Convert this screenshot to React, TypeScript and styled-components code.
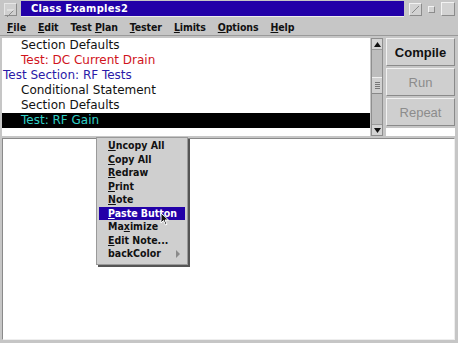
import React from "react";
import styled, { createGlobalStyle } from "styled-components";

const GlobalStyle = createGlobalStyle`
  html, body {
    margin: 0;
    padding: 0;
    background: #c4c4c4;
  }
  body {
    font-family: "DejaVu Sans", "Liberation Sans", sans-serif;
  }
`;

const Styles = {
  Window: styled.div`
    width: 458px;
    height: 343px;
    background: #c6c6c6;
    display: flex;
    flex-direction: column;
    position: relative;
    overflow: hidden;
  `,

  TitleBar: styled.div`
    height: 18px;
    display: flex;
    align-items: center;
    padding: 0 3px 0 4px;
    gap: 3px;
    background: #c6c6c6;
  `,
  CloseBox: styled.div`
    width: 11px;
    height: 11px;
    border: 1px solid #e6e6e6;
    border-right-color: #8a8a8a;
    border-bottom-color: #8a8a8a;
    background: #cfcfcf;
    margin-right: 1px;
  `,
  Title: styled.div`
    flex: 1;
    height: 15px;
    background: #2200a8;
    color: #ffffff;
    font-family: "DejaVu Sans Condensed", "DejaVu Sans", sans-serif;
    font-weight: bold;
    font-size: 11px;
    line-height: 15px;
    padding-left: 10px;
    border-bottom: 1px solid #ededed;
    letter-spacing: 0.3px;
  `,
  WidgetRow: styled.div`
    display: flex;
    align-items: center;
    gap: 6px;
    margin-left: 2px;
  `,
  Widget: styled.div<{ size: number }>`
    width: ${({ size }) => size}px;
    height: ${({ size }) => size}px;
    border: 1px solid #8c8c8c;
    border-top-color: #f2f2f2;
    border-left-color: #f2f2f2;
    background: #d2d2d2;
    display: flex;
    align-items: center;
    justify-content: center;
  `,

  MenuBar: styled.div`
    height: 17px;
    display: flex;
    align-items: center;
    padding-left: 7px;
    gap: 12px;
    background: #c6c6c6;
  `,
  MenuItem: styled.span`
    font-family: "DejaVu Sans Condensed", "DejaVu Sans", sans-serif;
    font-weight: bold;
    font-size: 10.5px;
    color: #111;
    letter-spacing: -0.1px;
    white-space: nowrap;
  `,
  Mnemonic: styled.span`
    text-decoration: underline;
    text-underline-offset: 1px;
  `,

  TopPane: styled.div`
    height: 98px;
    display: flex;
    padding: 2px 3px 0 2px;
    border-top: 1px solid #9a9a9a;
  `,
  ListBox: styled.div`
    flex: 1;
    background: #ffffff;
    display: flex;
    flex-direction: column;
    overflow: hidden;
  `,
  ListRow: styled.div<{ indent: number; color: string; selected?: boolean }>`
    height: 15px;
    line-height: 15px;
    padding-left: ${({ indent }) => indent}px;
    color: ${({ color }) => color};
    background: ${({ selected }) => (selected ? "#000000" : "transparent")};
    font-family: "DejaVu Sans", sans-serif;
    font-size: 12px;
    white-space: nowrap;
  `,

  ScrollBar: styled.div`
    width: 10px;
    display: flex;
    flex-direction: column;
    background: #bdbdbd;
    border: 1px solid #8f8f8f;
    margin: 0 3px 0 1px;
  `,
  ScrollArrow: styled.div<{ down?: boolean }>`
    height: 10px;
    background: #d4d4d4;
    border-bottom: ${({ down }) => (down ? "none" : "1px solid #9a9a9a")};
    border-top: ${({ down }) => (down ? "1px solid #9a9a9a" : "none")};
    display: flex;
    align-items: center;
    justify-content: center;
  `,
  ScrollTrack: styled.div`
    flex: 1;
    display: flex;
    flex-direction: column;
    padding-top: 27px;
  `,
  ScrollThumb: styled.div`
    height: 15px;
    background: #d0d0d0;
    border-top: 1px solid #f0f0f0;
    border-bottom: 1px solid #888;
    display: flex;
    flex-direction: column;
    align-items: center;
    justify-content: center;
    gap: 1px;
  `,
  Grip: styled.div`
    width: 5px;
    height: 1px;
    background: #777;
  `,

  ButtonColumn: styled.div`
    width: 69px;
    display: flex;
    flex-direction: column;
    gap: 2px;
  `,
  Button: styled.div<{ disabled?: boolean }>`
    height: 26px;
    display: flex;
    align-items: center;
    justify-content: center;
    background: #cfcfcf;
    border: 1px solid #f2f2f2;
    border-right-color: #8a8a8a;
    border-bottom-color: #8a8a8a;
    font-family: "Liberation Sans", Arial, sans-serif;
    font-size: 13px;
    font-weight: ${({ disabled }) => (disabled ? "normal" : "bold")};
    color: ${({ disabled }) => (disabled ? "#8c8c8c" : "#111")};
  `,
  ButtonFill: styled.div`
    flex: 1;
    background: #ffffff;
  `,

  BottomPane: styled.div`
    flex: 1;
    margin: 2px 3px 3px 2px;
    background: #ffffff;
    border-top: 1px solid #8a8a8a;
    border-left: 1px solid #8a8a8a;
    border-right: 1px solid #eeeeee;
    border-bottom: 1px solid #eeeeee;
  `,

  PopupMenu: styled.div`
    position: absolute;
    left: 96px;
    top: 137px;
    width: 90px;
    padding: 1px 0 3px 0;
    background: #cfcfcf;
    border: 1px solid #9a9a9a;
    box-shadow: 2px 2px 0 #555;
  `,
  PopupItem: styled.div<{ active?: boolean }>`
    height: 13.5px;
    line-height: 13.5px;
    margin: 0 2px;
    padding: 0 5px 0 9px;
    display: flex;
    justify-content: space-between;
    white-space: nowrap;
    font-family: "DejaVu Sans Condensed", "DejaVu Sans", sans-serif;
    font-weight: bold;
    font-size: 10.5px;
    color: ${({ active }) => (active ? "#ffffff" : "#111")};
    background: ${({ active }) => (active ? "#2200a8" : "transparent")};
  `,
  Cursor: styled.svg`
    position: absolute;
    left: 160px;
    top: 212px;
  `,
};

const Mn: React.FC<{ text: string; at: number }> = ({ text, at }) => (
  <>
    {text.slice(0, at)}
    <Styles.Mnemonic>{text[at]}</Styles.Mnemonic>
    {text.slice(at + 1)}
  </>
);

const menus: [string, number][] = [
  ["File", 0],
  ["Edit", 0],
  ["Test Plan", 5],
  ["Tester", 0],
  ["Limits", 0],
  ["Options", 0],
  ["Help", 0],
];

const rows = [
  { text: "Section Defaults", indent: 19, color: "#111111" },
  { text: "Test: DC Current Drain", indent: 19, color: "#d0141c" },
  { text: "Test Section: RF Tests", indent: 1, color: "#2a1aa8" },
  { text: "Conditional Statement", indent: 19, color: "#111111" },
  { text: "Section Defaults", indent: 19, color: "#111111" },
  { text: "Test: RF Gain", indent: 19, color: "#30d0c8", selected: true },
];

const popupItems: { text: string; at: number; active?: boolean; sub?: boolean }[] = [
  { text: "Uncopy All", at: 0 },
  { text: "Copy All", at: 0 },
  { text: "Redraw", at: 0 },
  { text: "Print", at: 0 },
  { text: "Note", at: 0 },
  { text: "Paste Button", at: 0, active: true },
  { text: "Maximize", at: 2 },
  { text: "Edit Note...", at: 0 },
  { text: "backColor", at: -1, sub: true },
];

export default function App() {
  return (
    <Styles.Window>
      <GlobalStyle />
      <Styles.TitleBar>
        <Styles.CloseBox>
          <svg width="11" height="11" viewBox="0 0 11 11">
            <path d="M2 9 L9 2" stroke="#8a8a8a" strokeWidth="1" />
            <path d="M2 2 H9" stroke="#eee" strokeWidth="1" />
          </svg>
        </Styles.CloseBox>
        <Styles.Title>Class Examples2</Styles.Title>
        <Styles.WidgetRow>
          <Styles.Widget size={11}>
            <svg width="11" height="11" viewBox="0 0 11 11">
              <path d="M2 9 L9 2" stroke="#8a8a8a" strokeWidth="1" />
            </svg>
          </Styles.Widget>
          <Styles.Widget size={5} />
          <Styles.Widget size={12} />
        </Styles.WidgetRow>
      </Styles.TitleBar>

      <Styles.MenuBar>
        {menus.map(([m, at]) => (
          <Styles.MenuItem key={m}>
            <Mn text={m} at={at} />
          </Styles.MenuItem>
        ))}
      </Styles.MenuBar>

      <Styles.TopPane>
        <Styles.ListBox>
          {rows.map((r, i) => (
            <Styles.ListRow key={i} indent={r.indent} color={r.color} selected={r.selected}>
              {r.text}
            </Styles.ListRow>
          ))}
        </Styles.ListBox>
        <Styles.ScrollBar>
          <Styles.ScrollArrow>
            <svg width="7" height="5" viewBox="0 0 7 5">
              <path d="M3.5 0 L7 5 H0 Z" fill="#111" />
            </svg>
          </Styles.ScrollArrow>
          <Styles.ScrollTrack>
            <Styles.ScrollThumb>
              <Styles.Grip />
              <Styles.Grip />
              <Styles.Grip />
              <Styles.Grip />
            </Styles.ScrollThumb>
          </Styles.ScrollTrack>
          <Styles.ScrollArrow down>
            <svg width="7" height="5" viewBox="0 0 7 5">
              <path d="M0 0 H7 L3.5 5 Z" fill="#111" />
            </svg>
          </Styles.ScrollArrow>
        </Styles.ScrollBar>
        <Styles.ButtonColumn>
          <Styles.Button>Compile</Styles.Button>
          <Styles.Button disabled>Run</Styles.Button>
          <Styles.Button disabled>Repeat</Styles.Button>
          <Styles.ButtonFill />
        </Styles.ButtonColumn>
      </Styles.TopPane>

      <Styles.BottomPane />

      <Styles.PopupMenu>
        {popupItems.map((p) => (
          <Styles.PopupItem key={p.text} active={p.active}>
            <span>{p.at >= 0 ? <Mn text={p.text} at={p.at} /> : p.text}</span>
            {p.sub && (
              <svg width="4" height="8" viewBox="0 0 4 8" style={{ alignSelf: "center" }}>
                <path d="M0 0 L4 4 L0 8 Z" fill="#8a8a8a" />
              </svg>
            )}
          </Styles.PopupItem>
        ))}
      </Styles.PopupMenu>
      <Styles.Cursor width="10" height="14" viewBox="0 0 10 14">
        <path d="M1 1 L1 11 L3.5 8.5 L5.5 13 L7 12.3 L5 8 L8.5 8 Z" fill="#111" stroke="#fff" strokeWidth="1" />
      </Styles.Cursor>
    </Styles.Window>
  );
}
